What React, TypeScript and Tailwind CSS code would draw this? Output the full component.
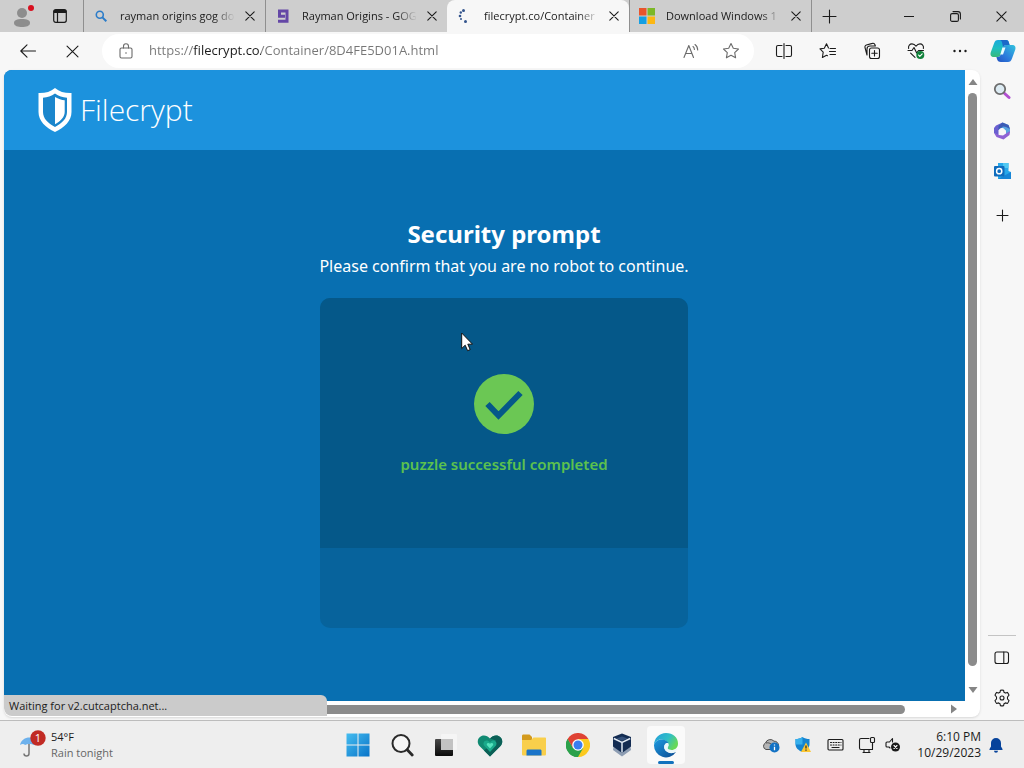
import { useState } from 'react';
import type { ReactNode } from 'react';

interface Tab {
  id: number;
  title: string;
  icon: ReactNode;
}

const line = {
  fill: 'none',
  stroke: 'currentColor',
  strokeWidth: 1.1,
  strokeLinecap: 'round' as const,
  strokeLinejoin: 'round' as const,
};

function SearchTabIcon() {
  return (
    <svg width="12" height="12" viewBox="0 0 12 12" fill="none" stroke="#2b7cc9" strokeWidth="1.6">
      <circle cx="4.8" cy="4.8" r="3.5" />
      <path d="M7.4 7.4 11.3 11.3" strokeWidth="2" />
    </svg>
  );
}

function GogIcon() {
  return (
    <svg width="12" height="14" viewBox="0 0 12 14" fill="none" stroke="#6447a6" strokeWidth="3">
      <path d="M8 7.200H2.500V2h7.500v10.200H1" />
    </svg>
  );
}

function SpinnerIcon() {
  return (
    <svg width="16" height="16" viewBox="0 0 16 16" fill="#33548c">
      <circle cx="6.500" cy="2.500" r="1.500" />
      <circle cx="3.800" cy="4.500" r="1.200" />
      <circle cx="3" cy="8" r="1.300" />
      <circle cx="4" cy="11" r="1" />
      <circle cx="8.500" cy="13.500" r="1.500" />
    </svg>
  );
}

function MicrosoftIcon() {
  return (
    <svg width="16" height="16" viewBox="0 0 16 16">
      <path fill="#e8542c" d="M0 0h7.500v7.500H0z" />
      <path fill="#7cb828" d="M8.500 0H16v7.500H8.500z" />
      <path fill="#149fe3" d="M0 8.500h7.500V16H0z" />
      <path fill="#fcb713" d="M8.500 8.500H16V16H8.500z" />
    </svg>
  );
}

const tabs: Tab[] = [
  { id: 1, title: 'rayman origins gog do', icon: <SearchTabIcon /> },
  { id: 2, title: 'Rayman Origins - GOG', icon: <GogIcon /> },
  { id: 3, title: 'filecrypt.co/Container', icon: <SpinnerIcon /> },
  { id: 4, title: 'Download Windows 1', icon: <MicrosoftIcon /> },
];

function CloseIcon({ size = 10 }: { size?: number }) {
  return (
    <svg width={size} height={size} viewBox="0 0 10 10" {...line}>
      <path d="m.8.8 8.400 8.400M9.200.8.8 9.200" vectorEffect="non-scaling-stroke" />
    </svg>
  );
}

function TabStrip() {
  const [active, setActive] = useState(3);

  return (
    <header className="flex h-8 shrink-0 bg-[#cecece]">
      <button aria-label="Profile" className="flex w-12 items-center justify-center">
        <svg width="20" height="24" viewBox="0 0 20 24">
          <circle cx="8" cy="9" r="5" fill="#8d8d8d" />
          <path d="M0 19c0-3 3-4 8-4s8 1 8 4-4 4-8 4-8-1-8-4Z" fill="#8d8d8d" />
          <circle cx="17" cy="4" r="3" fill="#d8101f" />
        </svg>
      </button>
      <button aria-label="Tab actions" className="flex w-6 items-center justify-center">
        <svg width="14" height="14" viewBox="0 0 14 14" {...line} strokeWidth="1.2">
          <rect x=".7" y=".7" width="12.600" height="12.600" rx="2" />
          <path d="M1 2.500h12M4.500 4v9" />
          <path d="M1.500 1.500h11v2h-11z" fill="currentColor" />
        </svg>
      </button>
      <div className="flex min-w-0 pl-[11px]">
        {tabs.map((tab) => (
          <div
            key={tab.id}
            className={
              tab.id === active
                ? 'flex w-[182px] items-center rounded-t-lg border-l border-transparent bg-[#f7f7f7]'
                : 'flex w-[182px] items-center border-l border-[#8f8f8f] bg-[#cecece] bg-clip-padding'
            }
          >
            <button onClick={() => setActive(tab.id)} className="flex h-full min-w-0 flex-1 items-center pl-[7px]">
              <span className="flex w-5 shrink-0 justify-center">{tab.icon}</span>
              <span className="ml-[9px] flex-1 overflow-hidden text-left text-[11px] leading-5 whitespace-nowrap text-[#1b1b1b] [mask-image:linear-gradient(to_right,#000_82%,transparent)]">
                {tab.title}
              </span>
            </button>
            <button aria-label={`Close ${tab.title}`} className="flex w-[30px] shrink-0 justify-center">
              <CloseIcon />
            </button>
          </div>
        ))}
      </div>
      <button aria-label="New tab" className="flex w-9 items-center justify-center border-l border-[#8f8f8f]">
        <svg width="15" height="15" viewBox="0 0 15 15" {...line}>
          <path d="M7.500 1v13M1 7.500h13" />
        </svg>
      </button>
      <div className="ml-auto flex">
        <button aria-label="Minimize" className="flex w-[46px] items-center justify-center">
          <svg width="10" height="10" viewBox="0 0 10 10" {...line}>
            <path d="M0 5.500h10" />
          </svg>
        </button>
        <button aria-label="Restore" className="flex w-[46px] items-center justify-center">
          <svg width="11" height="11" viewBox="0 0 11 11" {...line}>
            <rect x=".6" y="2.600" width="7.800" height="7.800" rx="1.500" />
            <path d="M3 .6h5a2.400 2.400 0 0 1 2.400 2.400v5" />
          </svg>
        </button>
        <button aria-label="Close window" className="flex w-[46px] items-center justify-center">
          <CloseIcon size={11} />
        </button>
      </div>
    </header>
  );
}

const toolbarButtons = [
  {
    label: 'Split screen',
    icon: (
      <svg width="18" height="18" viewBox="0 0 18 18" {...line}>
        <path d="M7 3.500H3A1.500 1.500 0 0 0 1.500 5v8A1.500 1.500 0 0 0 3 14.500h4M11 3.500h4A1.500 1.500 0 0 1 16.500 5v8a1.500 1.500 0 0 1-1.500 1.500h-4M9 1.500v15" />
      </svg>
    ),
  },
  {
    label: 'Favorites',
    icon: (
      <svg width="18" height="18" viewBox="0 0 18 18" {...line}>
        <path d="M9.500 6 7.500 1.800 5.300 6.200 1 6.900l3.200 3.200-.8 5.400 4.100-2.200 1 .5M11 6.500h5.500M10.500 9.500h6M11 12.500h5.500" />
      </svg>
    ),
  },
  {
    label: 'Collections',
    icon: (
      <svg width="18" height="18" viewBox="0 0 18 18" {...line}>
        <rect x="6.500" y="6" width="10" height="10.500" rx="2" />
        <path d="M11.500 8.500v5.500M8.800 11.200h5.400M4 13 2 5.500A2 2 0 0 1 3.400 3l6-1.600a2 2 0 0 1 2.500 1.400l.5 1.200H7a3 3 0 0 0-3 3Z" />
      </svg>
    ),
  },
  {
    label: 'Browser essentials',
    icon: (
      <svg width="18" height="18" viewBox="0 0 18 18" {...line}>
        <path d="M1.600 6.500C1 3.500 3 1.900 5 1.900c2 0 3.100 1 4 2.300.9-1.300 2-2.300 4-2.300 2 0 4 1.600 3.400 4.600M3.600 11.200 8 15.400M1 8.500h4l2-3 2.700 5.500 1.800-2.500h5" />
        <circle cx="13.300" cy="13" r="4" fill="#11823b" stroke="none" />
        <path d="m11.500 13 1.300 1.400 2.400-2.600" stroke="#fff" />
      </svg>
    ),
  },
  {
    label: 'Settings and more',
    icon: (
      <svg width="16" height="16" viewBox="0 0 16 16" fill="currentColor">
        <circle cx="2.500" cy="8" r="1.200" />
        <circle cx="8" cy="8" r="1.200" />
        <circle cx="13.500" cy="8" r="1.200" />
      </svg>
    ),
  },
];

function CopilotIcon() {
  return (
    <svg width="26" height="24" viewBox="0 0 26 24">
      <defs>
        <linearGradient id="copA" x1="0" y1="0" x2="0" y2="1">
          <stop offset="0" stopColor="#1aa9dd" />
          <stop offset=".5" stopColor="#1fbfc0" />
          <stop offset="1" stopColor="#39b978" />
        </linearGradient>
        <linearGradient id="copB" x1="1" y1="0" x2="0" y2="1">
          <stop offset="0" stopColor="#32c4de" />
          <stop offset=".6" stopColor="#2b79dc" />
          <stop offset="1" stopColor="#2252bf" />
        </linearGradient>
      </defs>
      <path d="M8 1h8c2 0 2.600 1 3 3l.6 2H16c-2 0-2.700 1-3.200 2.700l-2 6.300c-.5 2-1.300 3-3.300 3H4c-3 0-4-2-3.300-4.500L4 4.500C4.700 2 6 1 8 1Z" fill="url(#copA)" />
      <path d="M18 23h-7c-2.500 0-3.500-1-4-3l-.6-2h1.100c2 0 2.800-1 3.300-3l2-6.300C13.300 7 14 6 16 6h6c3 0 4 2 3.300 4.500L22 19.500c-.8 2.500-2 3.500-4 3.500Z" fill="url(#copB)" />
      <path d="M10 1h6c2 0 2.600 1 3 3l.6 2H16c-1.600 0-2.200.7-2.700 2C12 5 12.500 2 10 1Z" fill="#1d69c8" />
      <path d="M12.500 8.500h3l-2.500 7h-2.700Z" fill="#e8fbff" />
    </svg>
  );
}

function Toolbar() {
  return (
    <nav className="flex h-[38px] shrink-0 items-center pl-[6px]">
      <button aria-label="Back" className="flex w-11 justify-center">
        <svg width="16" height="16" viewBox="0 0 16 16" {...line}>
          <path d="M15.500 8H1M7 1.800.8 8 7 14.200" />
        </svg>
      </button>
      <button aria-label="Stop loading" className="flex w-11 justify-center">
        <CloseIcon size={13} />
      </button>
      <div className="mx-2 flex h-[34px] min-w-0 flex-1 items-center rounded-full bg-white pr-[3px] pl-2 text-[#6b6b6b]">
        <button aria-label="View site information" className="flex w-8 shrink-0 justify-center">
          <svg width="14" height="16" viewBox="0 0 14 16" {...line}>
            <rect x="1" y="5" width="12" height="10" rx="1.500" />
            <path d="M4.500 5V3.200a2.500 2.500 0 0 1 5 0V5" />
            <circle cx="7" cy="10" r=".8" fill="currentColor" stroke="none" />
          </svg>
        </button>
        <input
          aria-label="Address"
          defaultValue="https://filecrypt.co/Container/8D4FE5D01A.html"
          className="ml-[7px] min-w-0 flex-1 bg-[linear-gradient(to_right,#767676_44px,#1b1b1b_44px,#1b1b1b_112px,#767676_112px)] bg-clip-text text-[13px] text-[#767676] outline-none [-webkit-text-fill-color:transparent]"
        />
        <button aria-label="Read aloud" className="flex w-10 shrink-0 justify-center">
          <svg width="16" height="16" viewBox="0 0 16 16" {...line}>
            <path d="M1 14.500 5.800 2.500l4.700 12M2.700 10.500h6.200M10 3.500c1 .8 1.400 1.800 1.400 3M12 1.500c1.800 1.300 2.700 3 2.700 5.500" />
          </svg>
        </button>
        <button aria-label="Add to favorites" className="flex w-10 shrink-0 justify-center">
          <svg width="18" height="18" viewBox="0 0 18 18" {...line}>
            <path d="m9 1.500 2.300 4.800 5.200.7-3.800 3.600.9 5.200L9 13.300l-4.600 2.500.9-5.200L1.500 7l5.200-.7Z" />
          </svg>
        </button>
      </div>
      {toolbarButtons.map((b) => (
        <button key={b.label} aria-label={b.label} className="flex w-11 shrink-0 justify-center">
          {b.icon}
        </button>
      ))}
      <button aria-label="Copilot" className="flex w-[42px] shrink-0 justify-center">
        <CopilotIcon />
      </button>
    </nav>
  );
}

function Logo() {
  return (
    <a href="#" className="flex items-center gap-2 text-white">
      <svg width="34" height="44" viewBox="0 0 34 44">
        <path d="M17 0c4.500 4 10 5.200 16.500 5v19c0 9-7 15.500-16.500 20C7.500 39.500.5 33 .5 24V5C7 5.200 12.500 4 17 0Z" fill="#fff" />
        <path d="M17 5.500c3.700 2.700 7.500 4 12 4.200V24c0 6.500-5 11.300-12 15C10 35.300 5 30.500 5 24V9.700c4.500-.2 8.300-1.500 12-4.200Z" fill="#1b86cc" />
        <path d="M17 9c3.500 2 6.500 3 9.700 3.300V24c0 5-4 9-9.700 12.300Z" fill="#fff" />
      </svg>
      <span className="text-[30px] leading-10 font-light">Filecrypt</span>
    </a>
  );
}

function FilecryptPage() {
  return (
    <div className="relative h-full min-w-[1000px] bg-[#086fb1] font-['Noto_Sans','Open_Sans',sans-serif] text-white">
      <div className="flex h-20 items-center bg-[#1c92dd] pl-[34px] font-['Open_Sans',sans-serif]">
        <Logo />
      </div>
      <main className="flex flex-col items-center pt-[68px]">
        <h1 className="text-[24px] leading-8 font-bold">Security prompt</h1>
        <p className="mt-1 text-[16px] leading-6">Please confirm that you are no robot to continue.</p>
        <section className="mt-5 w-[368px] overflow-hidden rounded-[10px] bg-[#07639c]">
          <div className="flex h-[250px] flex-col items-center bg-[#055889] pt-[76px]">
            <svg width="60" height="60" viewBox="0 0 60 60">
              <circle cx="30" cy="30" r="30" fill="#6bc754" />
              <path d="m13.500 30 11 11.500L46.500 19" fill="none" stroke="#055889" strokeWidth="6" />
            </svg>
            <p className="mt-5 text-[15px] leading-5 font-semibold text-[#5cc14e]">puzzle successful completed</p>
          </div>
          <div className="h-20" />
        </section>
      </main>
      <svg width="12" height="20" viewBox="0 0 12 20" className="absolute top-[262px] left-[457px]">
        <path d="M.7 1v15.500l3.500-3.300 2.400 5.500 2.600-1.100-2.400-5.400h4.700Z" fill="#fff" stroke="#111" strokeWidth="1" />
      </svg>
    </div>
  );
}

function Arrow({ d }: { d: string }) {
  return (
    <svg width="10" height="10" viewBox="0 0 10 10" fill="#858585">
      <path d={d} />
    </svg>
  );
}

function Viewport() {
  return (
    <div className="relative mb-[3px] ml-1 flex min-w-0 flex-1 flex-col overflow-hidden rounded-lg bg-white shadow-sm">
      <div className="flex min-h-0 flex-1">
        <div className="min-w-0 flex-1 overflow-hidden">
          <FilecryptPage />
        </div>
        <div className="flex w-[15px] shrink-0 flex-col items-center">
          <div className="flex h-[23px] items-center">
            <Arrow d="M5 2 9.500 8h-9Z" />
          </div>
          <div className="flex-1">
            <div className="h-[98%] w-[9px] rounded-full bg-[#8b8b8b]" />
          </div>
          <div className="flex h-[23px] items-center">
            <Arrow d="M5 8 .5 2h9Z" />
          </div>
        </div>
      </div>
      <div className="flex h-4 shrink-0 items-center pr-[15px]">
        <div className="flex w-[23px] justify-center">
          <Arrow d="M2 5 8 .5v9Z" />
        </div>
        <div className="flex-1">
          <div className="h-[9px] w-[96%] rounded-full bg-[#8b8b8b]" />
        </div>
        <div className="flex w-[23px] justify-center">
          <Arrow d="M8 5 2 .5v9Z" />
        </div>
      </div>
      <div className="absolute bottom-px left-0 w-[323px] rounded-tr-md rounded-bl-lg bg-[#cbcbcb] pl-[5px] text-[11px] leading-[21px] text-[#1b1b1b]">
        Waiting for v2.cutcaptcha.net...
      </div>
    </div>
  );
}

function Sidebar() {
  return (
    <aside className="flex w-11 shrink-0 flex-col items-center pt-px">
      <button aria-label="Search" className="flex h-10 items-center">
        <svg width="18" height="18" viewBox="0 0 18 18">
          <path d="m10.500 10.500 5.500 5" stroke="#b04fd0" strokeWidth="3" strokeLinecap="round" />
          <circle cx="7" cy="7" r="5.200" fill="#dcebf3" stroke="#6d6d6d" strokeWidth="1.800" />
        </svg>
      </button>
      <button aria-label="Microsoft 365" className="flex h-10 items-center">
        <svg width="18" height="18" viewBox="0 0 18 18">
          <path d="M9.500.5 3 3.500 1 6v5l4.500 3V8L11 4.500Z" fill="#6a5fd0" />
          <path d="m9.500.5 6 2.500L17 7v4l-4 2V8.500L7.500 5l4-1.500Z" fill="#5aa5e0" />
          <path d="M9.500.5 15.500 3 17 7l-4-2-3-.5L5.500 8V4Z" fill="#3b5cb5" />
          <path d="m17 9-.5 4-6 4.500-7-2.500L1 11l5 2 4 .5 4.500-3Z" fill="#8e62d4" />
          <circle cx="9" cy="9" r="2.900" fill="#f7f7f7" />
        </svg>
      </button>
      <button aria-label="Outlook" className="flex h-10 items-center">
        <svg width="18" height="18" viewBox="0 0 18 18">
          <path d="M5 1h10.500v8L18 10v7H5Z" fill="#28a8ea" />
          <path d="M10 1h5.500v5H10Z" fill="#50c8f2" />
          <path d="m5 17 13-7v7Z" fill="#1685d6" />
          <rect x="1" y="4" width="10.500" height="10.500" rx="1" fill="#0f6cbd" />
          <circle cx="6.200" cy="9.200" r="2.600" fill="none" stroke="#fff" strokeWidth="1.500" />
        </svg>
      </button>
      <button aria-label="Customize" className="mt-1 flex h-10 items-center">
        <svg width="13" height="13" viewBox="0 0 13 13" {...line}>
          <path d="M6.500 1v11M1 6.500h11" />
        </svg>
      </button>
      <div className="mt-auto w-7 border-t border-[#c4c4c4]" />
      <button aria-label="Hide sidebar" className="mt-[2px] flex h-10 items-center">
        <svg width="16" height="14" viewBox="0 0 16 14" {...line}>
          <rect x="1" y="1" width="13.500" height="11.500" rx="2" />
          <path d="M9.800 1v11.500" />
        </svg>
      </button>
      <button aria-label="Settings" className="mb-[2px] flex h-10 items-center">
        <svg width="18" height="18" viewBox="0 0 18 18" {...line}>
          <path d="M7.400 1.300a8 8 0 0 1 3.200 0l.4 2 1.400.8 2-.7a8 8 0 0 1 1.600 2.800L14.500 8v2l1.500 1.700a8 8 0 0 1-1.600 2.800l-2-.6-1.400.8-.4 2a8 8 0 0 1-3.200 0l-.4-2-1.400-.8-2 .6A8 8 0 0 1 2 11.700L3.500 10V8L2 6.200a8 8 0 0 1 1.600-2.800l2 .7L7 3.300Z" />
          <circle cx="9" cy="9" r="2" />
        </svg>
      </button>
    </aside>
  );
}

const apps = [
  {
    label: 'Start',
    icon: (
      <svg width="24" height="24" viewBox="0 0 24 24">
        <defs>
          <linearGradient id="win" x1="0" y1="0" x2="1" y2="1">
            <stop offset="0" stopColor="#45bdf0" />
            <stop offset="1" stopColor="#0873c8" />
          </linearGradient>
        </defs>
        <path d="M.5.500h11v11H.5zM12.500.500h11v11h-11zM.5 12.500h11v11H.5zM12.500 12.500h11v11h-11z" fill="url(#win)" />
      </svg>
    ),
  },
  {
    label: 'Search',
    icon: (
      <svg width="24" height="24" viewBox="0 0 24 24" fill="none" stroke="#2a2a2a">
        <circle cx="11" cy="10.500" r="8.500" strokeWidth="2" fill="#f6f6f6" />
        <path d="m17.200 16.700 5 5.300" strokeWidth="2.800" strokeLinecap="round" />
      </svg>
    ),
  },
  {
    label: 'Task view',
    icon: (
      <svg width="24" height="24" viewBox="0 0 24 24">
        <defs>
          <linearGradient id="task" x1="0" y1="0" x2="0" y2="1">
            <stop offset="0" stopColor="#4a4a4a" />
            <stop offset="1" stopColor="#0a0a0a" />
          </linearGradient>
        </defs>
        <rect x="1" y="6" width="18" height="17" rx="1" fill="url(#task)" />
        <rect x="7" y="1" width="16" height="16" rx="1" fill="#f5f5f5" />
        <path d="M7 6h12v11H7z" fill="#c2c2c2" />
      </svg>
    ),
  },
  {
    label: 'Family',
    icon: (
      <svg width="26" height="24" viewBox="0 0 26 24">
        <path d="M13 23.500 2.500 13C-.5 9.500.5 4.500 4.500 3c3.200-1.200 6 0 8.500 2.600C15.500 3 18.300 1.800 21.500 3c4 1.500 5 6.500 2 10Z" fill="#108a72" />
        <path d="M13 5.600C15.500 3 18.300 1.800 21.500 3c4 1.500 5 6.500 2 10L13 23.500l-6-6 12-10Z" fill="#0b5f56" />
        <path d="m13 19-6-6.500C5 9.500 9 5 13 9.500c4-4.500 8 0 6 3Z" fill="#19a98a" />
        <path d="m13 15.500-3-3.200c-1-1.600 1-3.500 3-1.500 2-2 4-.1 3 1.500Z" fill="#55e3bd" />
      </svg>
    ),
  },
  {
    label: 'File Explorer',
    icon: (
      <svg width="26" height="24" viewBox="0 0 26 24">
        <path d="M1 3c0-1 .6-1.500 1.500-1.500h6L11 4v5H1Z" fill="#d39a1d" />
        <path d="M1 7h9l2.500-2.500H24c.6 0 1 .4 1 1V21c0 1-.5 1.500-1.500 1.500h-21C1.500 22.500 1 22 1 21Z" fill="#f9cf4b" />
        <path d="M5.500 22.500V18c0-1 .6-1.500 1.500-1.500h12c1 0 1.500.5 1.500 1.500v4.500Z" fill="#1a74c9" />
      </svg>
    ),
  },
  {
    label: 'Google Chrome',
    icon: (
      <svg width="24" height="24" viewBox="0 0 24 24">
        <path d="M12 12 1.600 6A12 12 0 0 1 22.400 6Z" fill="#df4334" />
        <path d="M12 12V6h10.400A12 12 0 0 1 12 24Z" fill="#fbc91e" />
        <path d="m12 12 5.200 3L12 24A12 12 0 0 1 1.600 6l5.200 9Z" fill="#2ba14b" />
        <path d="M1.600 6 6.800 15 12 12V6Z" fill="#df4334" />
        <path d="M1.600 6 6.800 15 12 18V24A12 12 0 0 1 1.600 6Z" fill="#2ba14b" />
        <circle cx="12" cy="12" r="5.800" fill="#fff" />
        <circle cx="12" cy="12" r="4.500" fill="#3a7df0" />
      </svg>
    ),
  },
  {
    label: 'VirtualBox',
    icon: (
      <svg width="22" height="24" viewBox="0 0 22 24">
        <path d="m11 12 8-1 1 6-9 6.500L2 17l1-6Z" fill="#8d9db3" />
        <path d="M11 .5 20 4v9.500L11 20l-9-6.500V4Z" fill="#132c52" />
        <path d="m11 3.500 5.500 2-5.500 2.200-5.500-2.200Z" fill="#34507a" />
        <path d="m2.800 5.500 8.200 4 8.200-4M11 9.500v10" fill="none" stroke="#dfe8f2" strokeWidth="1.500" />
      </svg>
    ),
  },
  {
    label: 'Microsoft Edge',
    icon: (
      <svg width="26" height="26" viewBox="0 0 26 26">
        <defs>
          <linearGradient id="edgeTop" x1="0" y1="0" x2="1" y2=".5">
            <stop offset="0" stopColor="#239ddd" />
            <stop offset=".6" stopColor="#31bfc5" />
            <stop offset="1" stopColor="#67d857" />
          </linearGradient>
          <linearGradient id="edgeBottom" x1="0" y1="0" x2="1" y2="1">
            <stop offset="0" stopColor="#1e9ae0" />
            <stop offset="1" stopColor="#0b4a91" />
          </linearGradient>
        </defs>
        <path d="M1 13A12 12 0 0 1 13 1c7 0 12 4.600 12 10.500 0 4-2.700 6.500-6.500 6.500-2.700 0-4-1-4-2 0-.8 1-1.300 1-3 0-2.700-3-5.500-7.500-5.500C4.500 7.500 1.700 10 1 13Z" fill="url(#edgeTop)" />
        <path d="M1 13c.7-3 3.500-5.500 7.500-5.500 3.500 0 6 1.700 7 3.600-2.500-.3-4.300 1.300-4.300 4 0 4.600 5.800 7.900 11.800 4.900A12 12 0 0 1 1 13Z" fill="url(#edgeBottom)" />
        <path d="M15.500 13c0-.7-.2-1.300-.4-1.900-2.400-.2-3.900 1.500-3.900 4 0 3.600 4.300 6.700 9.300 5.700 1.500-.6 2.700-1.700 3.500-3.300.2-.7-.2-1-.8-.6-1.200.7-2.800 1.100-4.700 1.100-2.700 0-4-1-4-2 0-.8 1-1.300 1-3Z" fill="#eaf7fa" />
      </svg>
    ),
  },
];

function Taskbar() {
  return (
    <footer className="grid h-12 shrink-0 grid-cols-[1fr_auto_1fr] items-center border-t border-[#bdbdbd] bg-[#eeeeee] text-[11px] leading-4">
      <button className="flex items-center gap-[5px] pl-5 text-left">
        <svg width="26" height="30" viewBox="0 0 26 30">
          <path d="M9 12v11.500a2.500 2.500 0 0 1-5 0" fill="none" stroke="#777" strokeWidth="1.500" />
          <path d="M0 15C1 10 5 7.500 9.500 7.500S18 10 19 15c-2-1.500-4-1.500-5 0-2-1.500-7-1.500-9 0-1-1.500-3-1.500-5 0Z" fill="#6db1ec" />
          <circle cx="18" cy="8" r="7.700" fill="#c12a24" />
          <text x="18" y="12" fill="#fff" fontSize="11" textAnchor="middle">1</text>
        </svg>
        <span>
          <span className="block text-[#1b1b1b]">54°F</span>
          <span className="block text-[#666]">Rain tonight</span>
        </span>
      </button>
      <div className="flex">
        {apps.map((app, i) => (
          <button key={app.label} aria-label={app.label} className="flex h-[46px] w-11 items-center justify-center">
            {i === apps.length - 1 ? (
              <span className="relative flex h-[38px] w-[38px] items-center justify-center rounded bg-[#fafafa]">
                {app.icon}
                <span className="absolute bottom-0 h-[3px] w-4 rounded-full bg-[#1272bd]" />
              </span>
            ) : (
              app.icon
            )}
          </button>
        ))}
      </div>
      <div className="flex items-center justify-end pr-[21px]">
        <button aria-label="OneDrive" className="flex w-8 justify-center">
          <svg width="18" height="16" viewBox="0 0 18 16">
            <path d="M4 12.500A3.500 3.500 0 0 1 3.500 6 5 5 0 0 1 12 4.200a4.200 4.200 0 0 1 4.500 4.300c0 2-1.500 4-3.500 4Z" fill="#b5b5b5" stroke="#4c4c4c" />
            <path d="M4 6c4-1 6 2 9 4" stroke="#4c4c4c" fill="none" />
            <circle cx="12.500" cy="10.500" r="5" fill="#1272c4" />
            <path d="M12.500 9.800v3.500M12.500 7.500v1" stroke="#fff" strokeWidth="1.300" />
          </svg>
        </button>
        <button aria-label="Windows Security" className="flex w-8 justify-center">
          <svg width="16" height="17" viewBox="0 0 16 17">
            <path d="M7.500 1C9.500 2.500 12 3 14.500 3v5c0 4-3 6.500-7 8-4-1.500-7-4-7-8V3c2.500 0 5-.5 7-2Z" fill="#1584d0" />
            <path d="M7.500 1v7.500h-7V3c2.500 0 5-.5 7-2Z" fill="#37b0ec" />
            <path d="m11 6.500 5 9.500H6Z" fill="#fcc733" />
            <path d="M11 9.500v3M11 13.500v1.200" stroke="#222" strokeWidth="1.200" />
          </svg>
        </button>
        <button aria-label="Touch keyboard" className="flex w-8 justify-center">
          <svg width="17" height="14" viewBox="0 0 17 14" {...line}>
            <rect x="1" y="1.500" width="15" height="10.500" rx="1" />
            <path d="M3.500 4.500h10.500M3.500 7h10.500" strokeDasharray="1 1.600" />
            <path d="M5 9.500h7" />
          </svg>
        </button>
        <button aria-label="Network" className="flex w-8 justify-center">
          <svg width="18" height="18" viewBox="0 0 18 18" {...line}>
            <path d="M11 2.500H3A1.500 1.500 0 0 0 1.500 4v8A1.500 1.500 0 0 0 3 13.500h11.500V8M6 13.500v3M11 13.500v3M5 16.500h7" />
            <rect x="12.500" y="1.500" width="4" height="5" rx="1" />
            <path d="M14.500 6.500V10" />
          </svg>
        </button>
        <button aria-label="Volume muted" className="flex w-5 justify-center">
          <svg width="16" height="16" viewBox="0 0 16 16" {...line}>
            <path d="M7.500 5V1.500L4.500 5H2a1 1 0 0 0-1 1v3a1 1 0 0 0 1 1h2l1 1" />
            <circle cx="10.500" cy="10" r="4.500" fill="#1b1b1b" stroke="none" />
            <path d="m9 8.500 3 3M12 8.500l-3 3" stroke="#fff" />
          </svg>
        </button>
        <button className="ml-[14px] text-right text-[12px] leading-4 text-[#1b1b1b]">
          <span className="block">6:10 PM</span>
          <span className="block">10/29/2023</span>
        </button>
        <button aria-label="Notifications" className="ml-2 flex justify-center">
          <svg width="14" height="16" viewBox="0 0 14 16" fill="#07439b">
            <path d="M7 1a5 5 0 0 1 5 5v3.500l1.500 2.500c.2.500 0 1-.6 1H1.100c-.6 0-.8-.5-.6-1L2 9.500V6a5 5 0 0 1 5-5ZM5 13.800h4a2 2 0 0 1-4 0Z" />
          </svg>
        </button>
      </div>
    </footer>
  );
}

export default function App() {
  return (
    <div className="flex h-screen flex-col bg-[#f7f7f7] font-['Open_Sans','Noto_Sans',sans-serif] text-[#1b1b1b]">
      <TabStrip />
      <Toolbar />
      <div className="flex min-h-0 flex-1">
        <Viewport />
        <Sidebar />
      </div>
      <Taskbar />
    </div>
  );
}
